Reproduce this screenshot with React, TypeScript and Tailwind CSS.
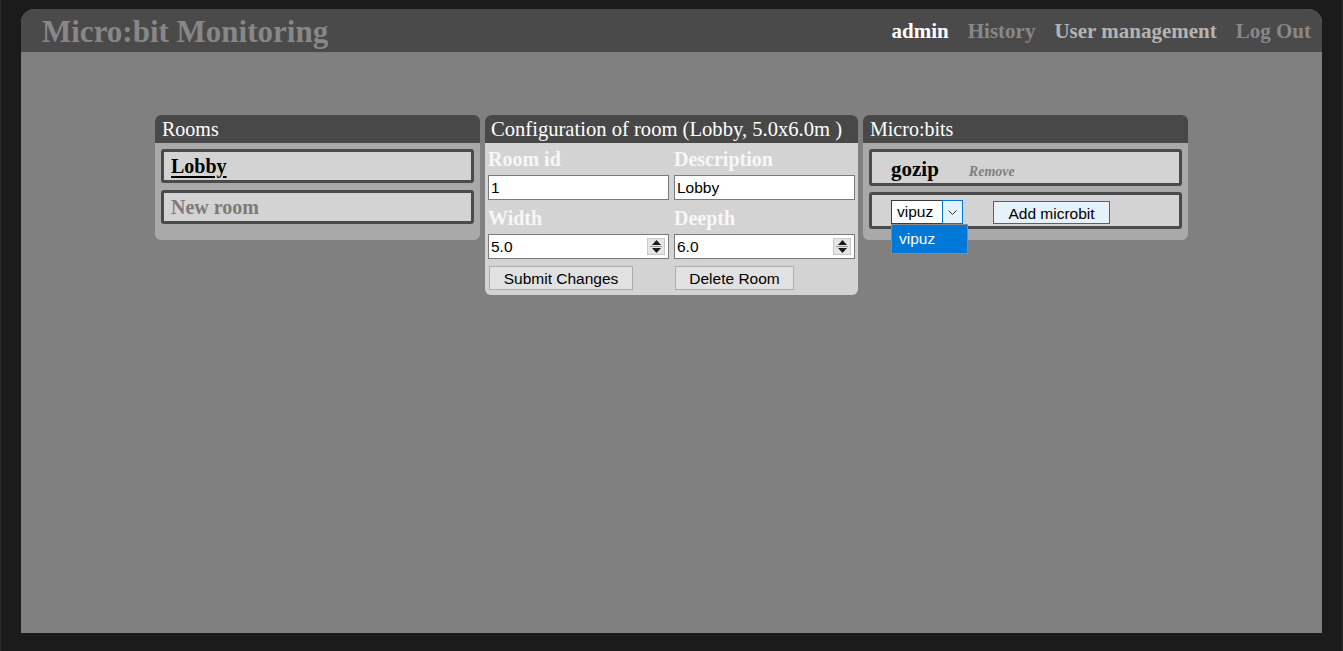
import { useState } from "react";

const serif = "font-['Liberation_Serif','Times_New_Roman',serif]";
const sans = "font-['Liberation_Sans',Arial,sans-serif]";

function Spinner() {
    return (
        <div className="absolute right-[3px] top-[3px] w-[18px] h-[17px] bg-[#e5e5e5] border border-[#c8c8c8] flex flex-col items-center justify-center gap-[1px]">
            <svg width="9" height="5" viewBox="0 0 9 5"><path d="M4.5 0 L9 5 L0 5 Z" fill="#1a1a1a" /></svg>
            <div className="w-[12px] h-[1px] bg-[#9a9a9a]"></div>
            <svg width="9" height="5" viewBox="0 0 9 5"><path d="M0 0 L9 0 L4.5 5 Z" fill="#1a1a1a" /></svg>
        </div>
    );
}

function Field({ value, number }: { value: string; number?: boolean }) {
    return (
        <div className={`relative h-[25px] bg-white border border-[#7a7a7a] flex items-center px-[2px] pt-[1px] text-[15.5px] text-black ${sans}`}>
            {value}
            {number && <Spinner />}
        </div>
    );
}

export default function App() {
    const [selected] = useState("Lobby");
    return (
        <div className="w-screen h-screen bg-[#1b1b1b] border-x border-[#2c2c2c] px-[20px] pt-[9px] overflow-hidden">
            <div className="h-[624px] flex flex-col bg-[#808080] rounded-t-[14px] overflow-hidden">
                <div className={`h-[43px] shrink-0 bg-[#4a4a4a] flex items-center justify-between pl-[21px] pr-[11px] ${serif}`}>
                    <div className="text-[31px] font-bold text-[#878787] leading-none pt-[2px]">Micro:bit Monitoring</div>
                    <div className="flex items-center gap-[19px] text-[21px] font-bold leading-none pt-[1px]">
                        <span className="text-white">admin</span>
                        <span className="text-[#888888]">History</span>
                        <span className="text-[#b4b4b4]">User management</span>
                        <span className="text-[#888888]">Log Out</span>
                    </div>
                </div>

                <div className={`flex justify-center items-start gap-[5px] pt-[63px] ${serif}`}>
                    {/* Rooms */}
                    <div className="w-[325px] rounded-[6px] bg-[#a9a9a9] overflow-hidden">
                        <div className="h-[28px] bg-[#484848] text-white text-[20px] px-[7px] flex items-center leading-none">Rooms</div>
                        <div className="p-[6px] pb-[16px] flex flex-col gap-[7px]">
                            <div className="h-[34px] border-[3px] border-[#4a4a4a] rounded-[3px] bg-[#d3d3d3] px-[7px] flex items-center">
                                <span className="text-[20px] font-bold text-black underline underline-offset-[3px]">{selected}</span>
                            </div>
                            <div className="h-[34px] border-[3px] border-[#4a4a4a] rounded-[3px] bg-[#d3d3d3] px-[7px] flex items-center">
                                <span className="text-[20px] font-bold text-[#7b7b7b]">New room</span>
                            </div>
                        </div>
                    </div>

                    {/* Configuration */}
                    <div className="w-[373px] rounded-[6px] bg-[#d3d3d3] overflow-hidden">
                        <div className="h-[28px] bg-[#484848] text-white text-[20.6px] px-[6px] flex items-center leading-none whitespace-nowrap">
                            Configuration of room (Lobby, 5.0x6.0m )
                        </div>
                        <div className="grid grid-cols-2 gap-x-[5px] px-[3px] pb-[5px]">
                            <div className="flex flex-col">
                                <div className="h-[32px] flex items-center text-[20px] font-bold text-[#f7f7f7]">Room id</div>
                                <Field value="1" />
                                <div className="h-[34px] flex items-center text-[20px] font-bold text-[#f7f7f7] pt-[2px]">Width</div>
                                <Field value="5.0" number />
                                <button className={`mt-[7px] ml-[1px] h-[24px] w-[144px] bg-[#e1e1e1] border border-[#adadad] text-[15.5px] text-black ${sans}`}>Submit Changes</button>
                            </div>
                            <div className="flex flex-col">
                                <div className="h-[32px] flex items-center text-[20px] font-bold text-[#f7f7f7]">Description</div>
                                <Field value="Lobby" />
                                <div className="h-[34px] flex items-center text-[20px] font-bold text-[#f7f7f7] pt-[2px]">Deepth</div>
                                <Field value="6.0" number />
                                <button className={`mt-[7px] ml-[1px] h-[24px] w-[119px] bg-[#e1e1e1] border border-[#adadad] text-[15.5px] text-black ${sans}`}>Delete Room</button>
                            </div>
                        </div>
                    </div>

                    {/* Micro:bits */}
                    <div className="w-[325px] rounded-[6px] bg-[#a9a9a9]">
                        <div className="h-[28px] bg-[#484848] rounded-t-[6px] text-white text-[20px] px-[7px] flex items-center leading-none">Micro:bits</div>
                        <div className="p-[6px] pb-[11px] flex flex-col gap-[6px]">
                            <div className="h-[37px] border-[3px] border-[#4a4a4a] rounded-[3px] bg-[#d3d3d3] pl-[19px] flex items-baseline pt-[2px] gap-[30px]">
                                <span className="text-[21px] font-bold text-black">gozip</span>
                                <span className="text-[14px] font-bold italic text-[#808080]">Remove</span>
                            </div>
                            <div className="h-[37px] border-[3px] border-[#4a4a4a] rounded-[3px] bg-[#d3d3d3] pl-[19px] pt-[5px] flex items-start gap-[30px]">
                                <div className="relative">
                                    <div className={`flex h-[24px] text-[15.5px] text-black ${sans}`}>
                                        <div className="w-[51px] bg-white border border-r-0 border-[#3c3c3c] flex items-center px-[5px]">vipuz</div>
                                        <div className="w-[21px] bg-[#e5f1fb] border border-[#0078d7] flex items-center justify-center">
                                            <svg width="9" height="5" viewBox="0 0 9 5"><path d="M0.5 0.5 L4.5 4.5 L8.5 0.5" fill="none" stroke="#333" strokeWidth="1" /></svg>
                                        </div>
                                    </div>
                                    <div className={`absolute left-0 top-[24px] w-[77px] h-[30px] bg-[#0078d7] border border-[#8a8a8a] flex items-center px-[7px] text-[15.5px] text-white ${sans}`}>vipuz</div>
                                </div>
                                <button className={`mt-[1px] h-[23px] w-[117px] bg-[#e5f1fb] border border-[#0078d7] text-[15.5px] text-black ${sans}`}>Add microbit</button>
                            </div>
                        </div>
                    </div>
                </div>
            </div>
        </div>
    );
}
